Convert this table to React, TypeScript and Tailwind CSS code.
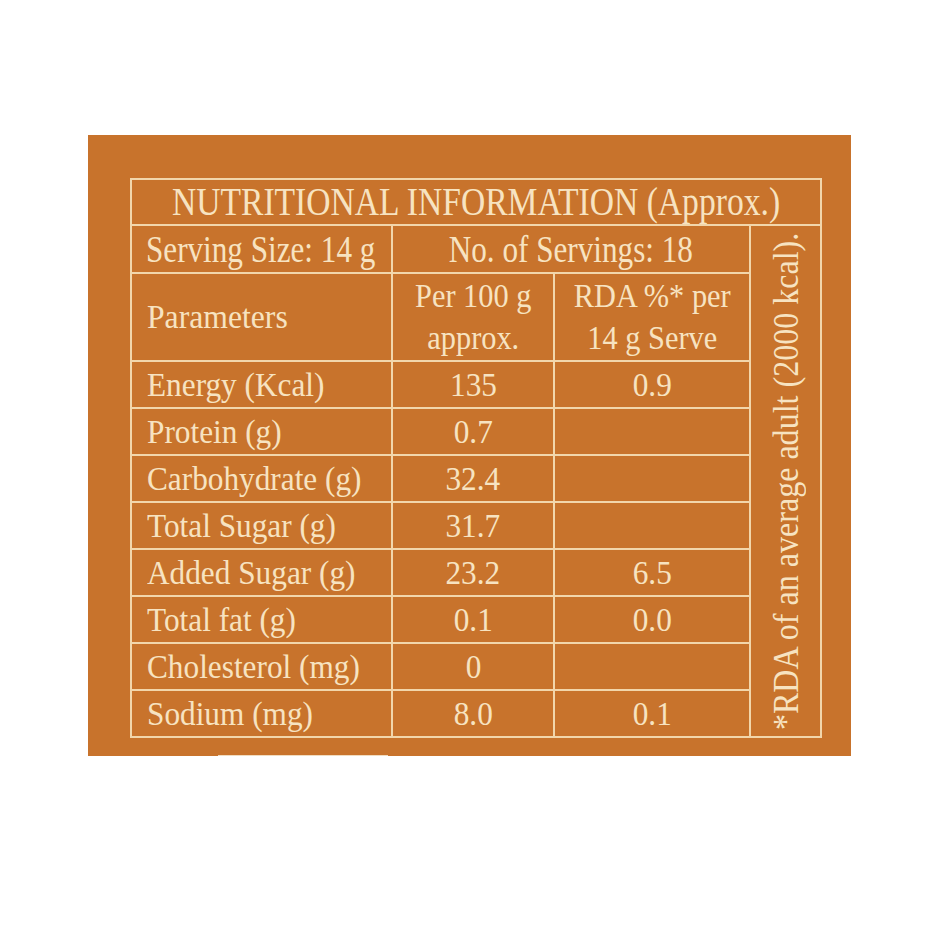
const rows: [string, string, string][] = [
  ['Energy (Kcal)', '135', '0.9'],
  ['Protein (g)', '0.7', ''],
  ['Carbohydrate (g)', '32.4', ''],
  ['Total Sugar (g)', '31.7', ''],
  ['Added Sugar (g)', '23.2', '6.5'],
  ['Total fat (g)', '0.1', '0.0'],
  ['Cholesterol (mg)', '0', ''],
  ['Sodium (mg)', '8.0', '0.1'],
];

const cell = 'bg-[#c8732c] flex items-center';

export default function App() {
  return (
    <div className="min-h-[940px] w-[940px] bg-white pt-[135px] pl-[88px] font-['Liberation_Serif',serif] text-[#f7e3c1]">
      <div className="w-[763px] h-[621px] bg-[#c8732c] pt-[43px] pl-[42px]">
        <div className="grid w-[692px] grid-cols-[259px_160px_194px_69px] grid-rows-[44px_46px_86px_repeat(8,45px)] gap-[2px] bg-[#f2d6ab] p-[2px]">
          {/* title */}
          <div className={`${cell} col-span-4 justify-center`}>
            <span className="inline-block whitespace-nowrap text-[40px] leading-none scale-x-[0.84]">
              NUTRITIONAL INFORMATION (Approx.)
            </span>
          </div>

          {/* side note */}
          <div className={`${cell} col-start-4 row-start-2 row-span-10 justify-center`}>
            <span className="inline-block whitespace-nowrap text-[36px] leading-none [writing-mode:vertical-rl] rotate-180 scale-y-[0.89]">
              *RDA of an average adult (2000 kcal).
            </span>
          </div>

          <div className={`${cell} col-start-1 row-start-2 pl-[14px]`}>
            <span className="inline-block whitespace-nowrap text-[38px] leading-none origin-left scale-x-[0.82]">
              Serving Size: 14 g
            </span>
          </div>
          <div className={`${cell} col-start-2 col-span-2 row-start-2 justify-center`}>
            <span className="inline-block whitespace-nowrap text-[38px] leading-none scale-x-[0.82]">
              No. of Servings: 18
            </span>
          </div>

          <div className={`${cell} col-start-1 row-start-3 pl-[15px]`}>
            <span className="inline-block whitespace-nowrap text-[33px] leading-none origin-left scale-x-[0.96]">
              Parameters
            </span>
          </div>
          <div className={`${cell} col-start-2 row-start-3 justify-center`}>
            <span className="inline-block text-center text-[33px] leading-[42px] scale-x-[0.92]">
              Per 100 g
              <br />
              approx.
            </span>
          </div>
          <div className={`${cell} col-start-3 row-start-3 justify-center`}>
            <span className="inline-block text-center text-[33px] leading-[42px] scale-x-[0.92]">
              RDA %* per
              <br />
              14 g Serve
            </span>
          </div>

          {rows.map(([name, per100, rda]) => (
            <div key={name} className="contents">
              <div className={`${cell} col-start-1 pl-[15px]`}>
                <span className="inline-block whitespace-nowrap text-[34px] leading-none origin-left scale-x-[0.92]">
                  {name}
                </span>
              </div>
              <div className={`${cell} col-start-2 justify-center`}>
                <span className="inline-block whitespace-nowrap text-[34px] leading-none scale-x-[0.92]">
                  {per100}
                </span>
              </div>
              <div className={`${cell} col-start-3 justify-center`}>
                <span className="inline-block whitespace-nowrap text-[34px] leading-none scale-x-[0.92]">
                  {rda}
                </span>
              </div>
            </div>
          ))}
        </div>
      </div>
      <div className="ml-[130px] -mt-px h-px w-[170px] bg-[#f1dcc0]" />
    </div>
  );
}
